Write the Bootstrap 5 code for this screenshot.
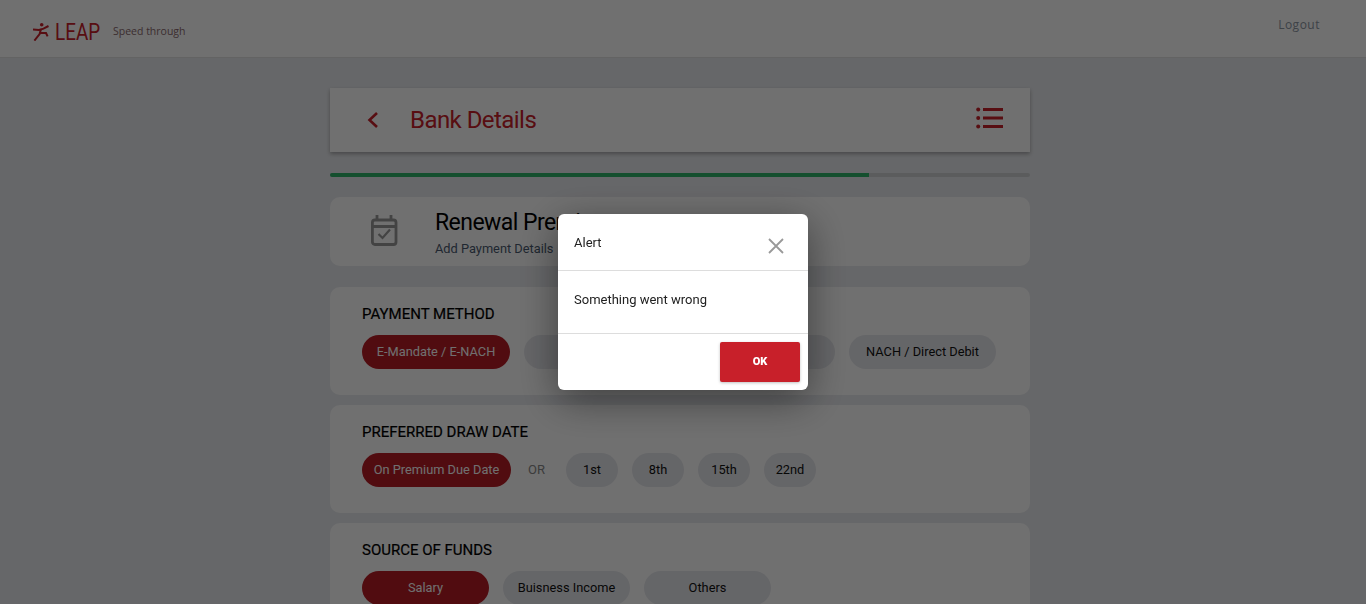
<!DOCTYPE html>
<html lang="en">
<head>
  <meta charset="UTF-8">
  <title>Bank Details</title>
  <link href="https://cdn.jsdelivr.net/npm/bootstrap@5.3.3/dist/css/bootstrap.min.css" rel="stylesheet">
  <style>
    html, body { height: 100%; overflow: hidden; }
    body { background: #e9ebef; font-family: Roboto, "Liberation Sans", sans-serif; color: #000; }
    .modal-backdrop.show { opacity: .56; }
    .top-bar { height: 58px; background: #fff; border-bottom: 1px solid #e2e2e2; padding: 0 46px 0 33px; }
    .logo-row { padding-top: 7px; }
    .logo-word { font-size: 23px; line-height: 1; color: #c8202a; width: 46px; display: inline-block; transform: scaleX(.82); transform-origin: left center; }
    .logo-tag { font-family: "Open Sans", sans-serif; font-size: 10.5px; color: #8a6a6e; margin-left: 12px; }
    .logout { font-family: "Open Sans", sans-serif; font-size: 12px; letter-spacing: .5px; color: #8d96a3; margin-top: -7px; }
    .page-col { width: 700px; margin-left: 330px; padding-top: 30px; }
    .title-bar { height: 64px; background: #fff; box-shadow: 0 2px 4px rgba(0,0,0,.3); padding: 0 27px 0 36px; }
    .title-text { font-size: 24px; color: #c8202a; margin-left: 31px; letter-spacing: -.55px; }
    .list-icon { margin-bottom: 5px; }
    .step-progress { height: 4px; margin-top: 21px; background: #d0d1d4; border-radius: 2px; }
    .step-progress .progress-bar { background: #2fb36a; }
    .info-card { height: 69px; background: #fff; border-radius: 10px; margin-top: 20px; padding-left: 40px; }
    .info-icon { margin-bottom: 2px; }
    .info-text { margin-left: 37px; padding-top: 4px; }
    .info-title { font-size: 23px; line-height: 26px; letter-spacing: -.55px; }
    .info-sub { font-size: 12.8px; color: #4a5a70; line-height: 16px; margin-top: 5px; }
    .pick-card { background: #fff; border-radius: 10px; padding: 17px 32px 0; margin-top: 10px; height: 108px; }
    .pick-card.first-pick { margin-top: 21px; }
    .pick-label { font-size: 15px; line-height: 20px; margin-bottom: 11px; -webkit-text-stroke: .2px #000; }
    .pick-row { gap: 14px; }
    .pick-chip { height: 34px; border-radius: 17px; background: #e7e8ed; font-size: 12.8px; color: #111; padding: 0; border: 0; }
    .pick-chip.on { background: #b81c25; color: #fff; }
    .chip-a { width: 148px; }
    .chip-b { width: 146px; }
    .chip-c { width: 151px; }
    .chip-d { width: 147px; }
    .chip-e { width: 149px; }
    .chip-f { width: 52px; }
    .chip-g { width: 127px; }
    .or-text { width: 27px; padding-left: 3px; font-size: 13px; color: #888; }
    .modal-dialog.alert-box { width: 250px; max-width: 250px; margin: 214px auto 0; }
    .alert-box .modal-content { border: 0; border-radius: 6px; box-shadow: 0 10px 40px rgba(0,0,0,.45); font-size: 13px; color: #222; }
    .alert-box .modal-header { height: 57px; padding: 2px 16px 0; border-bottom: 1px solid #ddd; }
    .alert-box .modal-body { height: 62px; padding: 19px 16px 0; flex: none; }
    .alert-box .modal-footer { height: 57px; padding: 8px; border-top: 1px solid #ddd; }
    .alert-close { background: none; border: 0; padding: 0; line-height: 0; margin-right: 8px; margin-top: 5px; }
    .ok-btn { width: 80px; height: 40px; background: #c8202a; color: #fff; border: 0; border-radius: 2px; font-size: 11px; font-weight: 900; padding: 0; margin: 0; box-shadow: 0 1px 3px rgba(0,0,0,.25); }
  </style>
</head>
<body class="modal-open">
  <header class="top-bar d-flex align-items-center justify-content-between">
    <div class="d-flex align-items-center logo-row">
      <svg width="18" height="18" viewBox="0 0 18 18" class="me-1" fill="none" stroke="#c8202a" stroke-width="2">
        <circle cx="8.7" cy="1.8" r="1.8" fill="#c8202a" stroke="none"/>
        <path d="M0 6.4 L6 7 L10.5 5.6 L15.5 3"/>
        <path d="M8 6 L6.6 11 L1.4 17.6"/>
        <path d="M6.6 10 L13 10 L14.6 13.4"/>
      </svg>
      <span class="logo-word">LEAP</span>
      <span class="logo-tag">Speed through</span>
    </div>
    <div class="logout">Logout</div>
  </header>

  <main class="page-col">
    <div class="title-bar d-flex align-items-center justify-content-between">
      <div class="d-flex align-items-center">
        <svg width="13" height="18" viewBox="0 0 13 18" fill="none" stroke="#c8202a" stroke-width="2.6"><path d="M11 2 L3.5 9 L11 16"/></svg>
        <span class="title-text">Bank Details</span>
      </div>
      <svg class="list-icon" width="27" height="22" viewBox="0 0 27 22" fill="#c8202a">
        <circle cx="2.2" cy="2.5" r="2"/><circle cx="2.2" cy="11" r="2"/><circle cx="2.2" cy="19.5" r="2"/>
        <rect x="7" y="1" width="20" height="3"/><rect x="7" y="9.5" width="20" height="3"/><rect x="7" y="18" width="20" height="3"/>
      </svg>
    </div>

    <div class="progress step-progress">
      <div class="progress-bar" style="width: 77%"></div>
    </div>

    <div class="info-card d-flex align-items-center">
      <svg class="info-icon" width="28" height="31" viewBox="0 0 28 31" fill="none" stroke="#999" stroke-width="2.8">
        <rect x="2.4" y="5" width="23.6" height="24.5" rx="2.5"/>
        <path d="M2.4 11.5 H26 M7 0 V5 M21 0 V5"/>
        <path d="M8.5 19 L12.5 23 L20 14.5" stroke-width="2.2"/>
      </svg>
      <div class="info-text">
        <div class="info-title">Renewal Premium</div>
        <div class="info-sub">Add Payment Details</div>
      </div>
    </div>

    <section class="pick-card first-pick">
      <div class="pick-label">PAYMENT METHOD</div>
      <div class="d-flex align-items-center pick-row">
        <button class="btn pick-chip on chip-a">E-Mandate / E-NACH</button>
        <button class="btn pick-chip chip-b"></button>
        <button class="btn pick-chip chip-c"></button>
        <button class="btn pick-chip chip-d">NACH / Direct Debit</button>
      </div>
    </section>

    <section class="pick-card">
      <div class="pick-label">PREFERRED DRAW DATE</div>
      <div class="d-flex align-items-center pick-row">
        <button class="btn pick-chip on chip-e">On Premium Due Date</button>
        <span class="or-text">OR</span>
        <button class="btn pick-chip chip-f">1st</button>
        <button class="btn pick-chip chip-f">8th</button>
        <button class="btn pick-chip chip-f">15th</button>
        <button class="btn pick-chip chip-f">22nd</button>
      </div>
    </section>

    <section class="pick-card">
      <div class="pick-label">SOURCE OF FUNDS</div>
      <div class="d-flex align-items-center pick-row">
        <button class="btn pick-chip on chip-g">Salary</button>
        <button class="btn pick-chip chip-g">Buisness Income</button>
        <button class="btn pick-chip chip-g">Others</button>
      </div>
    </section>
  </main>

  <div class="modal-backdrop show"></div>
  <div class="modal d-block" tabindex="-1">
    <div class="modal-dialog alert-box">
      <div class="modal-content">
        <div class="modal-header d-flex justify-content-between">
          <span>Alert</span>
          <button class="alert-close" aria-label="Close">
            <svg width="16" height="16" viewBox="0 0 16 16" stroke="#999" stroke-width="1.8"><path d="M1 1 L15 15 M15 1 L1 15"/></svg>
          </button>
        </div>
        <div class="modal-body">Something went wrong</div>
        <div class="modal-footer">
          <button class="ok-btn">OK</button>
        </div>
      </div>
    </div>
  </div>

  <script src="https://cdn.jsdelivr.net/npm/bootstrap@5.3.3/dist/js/bootstrap.bundle.min.js"></script>
</body>
</html>
